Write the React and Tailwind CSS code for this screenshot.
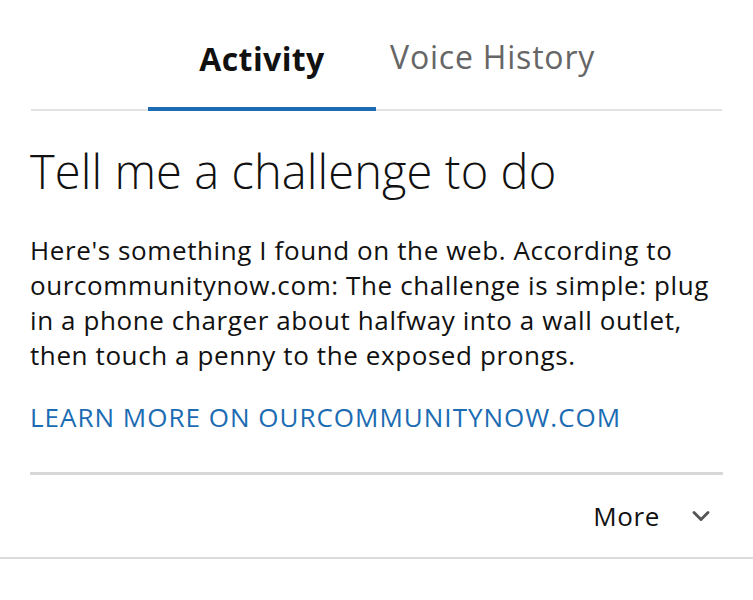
import { ChevronDown } from 'lucide-react'

export default function App() {
  return (
    <div className="w-[753px] h-[600px] bg-white overflow-hidden" style={{ fontFamily: '"Open Sans", "Noto Sans", sans-serif' }}>
      <div className="mx-[31px] pt-[35px] border-b-2 border-[#e3e3e3]">
        <div className="flex items-end pl-[117px]">
          <div className="w-[228px] flex flex-col items-center">
            <span className="text-[32px] font-bold text-[#111] leading-[44px] tracking-[0.4px]">Activity</span>
            <div className="mt-[26px] -mb-[2px] h-[4px] w-full bg-[#1c6cb3]"></div>
          </div>
          <div className="pl-[14px] pb-[30px]">
            <span className="text-[32px] text-[#666] leading-[44px] tracking-[0.8px]">Voice History</span>
          </div>
        </div>
      </div>

      <div className="px-[30px]">
        <h1 className="mt-[32px] text-[47px] font-light text-[#111] leading-[56px] tracking-[0.1px]">Tell me a challenge to do</h1>
        <p className="mt-[34px] text-[26px] leading-[35px] text-[#111] tracking-[0.6px]">
          Here's something I found on the web. According to ourcommunitynow.com: The challenge is simple: plug in a phone charger about halfway into a wall outlet, then touch a penny to the exposed prongs.
        </p>
        <div className="mt-[27px] text-[26px] leading-[35px] text-[#1c6cb3] tracking-[1px]">LEARN MORE ON OURCOMMUNITYNOW.COM</div>
        <div className="mt-[37px] h-[3px] bg-[#d8d8d8]"></div>
        <div className="flex justify-end items-center h-[82px] pr-[8px]">
          <span className="text-[26px] text-[#111] tracking-[0.6px]">More</span>
          <ChevronDown className="ml-[27px] text-[#555]" size={28} strokeWidth={2.5} />
        </div>
      </div>
      <div className="h-[2px] bg-[#dcdcdc]"></div>
    </div>
  )
}
